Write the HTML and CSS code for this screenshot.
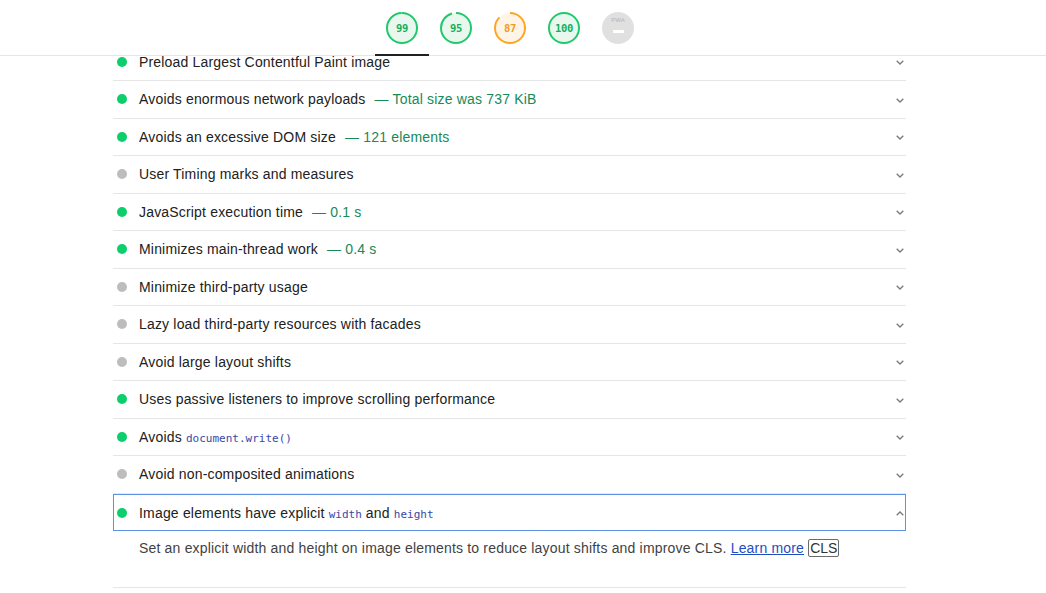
FILE: index.html
```html
<!DOCTYPE html>
<html>
<head>
<meta charset="utf-8">
<link rel="stylesheet" href="styles.css">
</head>
<body>
<header class="topbar">
  <div class="wrap">
    <div class="gauges">
      <div class="gauge active">
        <svg class="ring" viewBox="0 0 32 32"><circle class="bg pass-bg" cx="16" cy="16" r="15"/><circle class="arc pass-arc" cx="16" cy="16" r="15" stroke-dasharray="93.3 94.25"/></svg>
        <span class="num pass-num">99</span>
      </div>
      <div class="gauge">
        <svg class="ring" viewBox="0 0 32 32"><circle class="bg pass-bg" cx="16" cy="16" r="15"/><circle class="arc pass-arc" cx="16" cy="16" r="15" stroke-dasharray="89.5 94.25"/></svg>
        <span class="num pass-num">95</span>
      </div>
      <div class="gauge">
        <svg class="ring" viewBox="0 0 32 32"><circle class="bg avg-bg" cx="16" cy="16" r="15"/><circle class="arc avg-arc" cx="16" cy="16" r="15" stroke-dasharray="82 94.25"/></svg>
        <span class="num avg-num">87</span>
      </div>
      <div class="gauge">
        <svg class="ring" viewBox="0 0 32 32"><circle class="bg pass-bg" cx="16" cy="16" r="15"/><circle class="arc pass-arc" cx="16" cy="16" r="15" stroke-dasharray="94.25 94.25"/></svg>
        <span class="num pass-num">100</span>
      </div>
      <div class="gauge">
        <div class="pwa"><span class="pwa-label">PWA</span><span class="pwa-dash"></span></div>
      </div>
    </div>
  </div>
</header>

<main class="wrap list">
  <div class="audit"><span class="dot pass"></span><span class="title">Preload Largest Contentful Paint image</span><svg class="chev" viewBox="0 0 8 5"><path d="M0.7 0.7 L4 4 L7.3 0.7"/></svg></div>
  <div class="audit"><span class="dot pass"></span><span class="title">Avoids enormous network payloads</span><span class="disp">— Total size was 737 KiB</span><svg class="chev" viewBox="0 0 8 5"><path d="M0.7 0.7 L4 4 L7.3 0.7"/></svg></div>
  <div class="audit"><span class="dot pass"></span><span class="title">Avoids an excessive DOM size</span><span class="disp">— 121 elements</span><svg class="chev" viewBox="0 0 8 5"><path d="M0.7 0.7 L4 4 L7.3 0.7"/></svg></div>
  <div class="audit"><span class="dot na"></span><span class="title">User Timing marks and measures</span><svg class="chev" viewBox="0 0 8 5"><path d="M0.7 0.7 L4 4 L7.3 0.7"/></svg></div>
  <div class="audit"><span class="dot pass"></span><span class="title">JavaScript execution time</span><span class="disp">— 0.1 s</span><svg class="chev" viewBox="0 0 8 5"><path d="M0.7 0.7 L4 4 L7.3 0.7"/></svg></div>
  <div class="audit"><span class="dot pass"></span><span class="title">Minimizes main-thread work</span><span class="disp">— 0.4 s</span><svg class="chev" viewBox="0 0 8 5"><path d="M0.7 0.7 L4 4 L7.3 0.7"/></svg></div>
  <div class="audit"><span class="dot na"></span><span class="title">Minimize third-party usage</span><svg class="chev" viewBox="0 0 8 5"><path d="M0.7 0.7 L4 4 L7.3 0.7"/></svg></div>
  <div class="audit"><span class="dot na"></span><span class="title">Lazy load third-party resources with facades</span><svg class="chev" viewBox="0 0 8 5"><path d="M0.7 0.7 L4 4 L7.3 0.7"/></svg></div>
  <div class="audit"><span class="dot na"></span><span class="title">Avoid large layout shifts</span><svg class="chev" viewBox="0 0 8 5"><path d="M0.7 0.7 L4 4 L7.3 0.7"/></svg></div>
  <div class="audit"><span class="dot pass"></span><span class="title">Uses passive listeners to improve scrolling performance</span><svg class="chev" viewBox="0 0 8 5"><path d="M0.7 0.7 L4 4 L7.3 0.7"/></svg></div>
  <div class="audit"><span class="dot pass"></span><span class="title">Avoids <code>document.write()</code></span><svg class="chev" viewBox="0 0 8 5"><path d="M0.7 0.7 L4 4 L7.3 0.7"/></svg></div>
  <div class="audit"><span class="dot na"></span><span class="title">Avoid non-composited animations</span><svg class="chev" viewBox="0 0 8 5"><path d="M0.7 0.7 L4 4 L7.3 0.7"/></svg></div>
  <div class="expanded">
    <div class="audit open"><span class="dot pass"></span><span class="title">Image elements have explicit <code>width</code> and <code>height</code></span><svg class="chev" viewBox="0 0 8 5"><path d="M0.7 4.3 L4 1 L7.3 4.3"/></svg></div>
    <p class="desc">Set an explicit width and height on image elements to reduce layout shifts and improve CLS. <a href="#" class="learn">Learn more</a> <span class="badge">CLS</span></p>
  </div>
</main>
</body>
</html>
```

FILE: styles.css
```css
html, body {
  margin: 0;
  padding: 0;
  background: #ffffff;
}
body {
  font-family: "Liberation Sans", Arial, sans-serif;
  font-size: 14px;
  letter-spacing: 0.18px;
  color: #212121;
  overflow: hidden;
}
.wrap {
  margin-left: 113px;
  width: 793px;
}
.topbar {
  position: fixed;
  top: 0;
  left: 0;
  right: 0;
  height: 55px;
  background: #ffffff;
  border-bottom: 1px solid #e6e6e6;
  z-index: 10;
}
.topbar .wrap {
  height: 100%;
}
.gauges {
  display: flex;
  justify-content: center;
  height: 100%;
  padding-left: 1px;
}
.gauge {
  position: relative;
  width: 54px;
  height: 100%;
  display: flex;
  justify-content: center;
}
.gauge.active::after {
  content: "";
  position: absolute;
  left: 0;
  right: 0;
  bottom: -1px;
  height: 2px;
  background: #202124;
}
.ring {
  width: 32px;
  height: 32px;
  margin-top: 12px;
  transform: rotate(-90deg);
}
.bg {
  stroke: none;
}
.pass-bg { fill: #e9f8ef; }
.avg-bg { fill: #fff5e6; }
.arc {
  fill: none;
  stroke-width: 2;
}
.pass-arc { stroke: #22c96c; }
.avg-arc { stroke: #ffa526; }
.num {
  position: absolute;
  top: 12px;
  left: 0;
  right: 0;
  height: 32px;
  line-height: 32px;
  text-align: center;
  font-family: "DejaVu Sans Mono", monospace;
  font-weight: bold;
  font-size: 10.5px;
  letter-spacing: -0.3px;
}
.pass-num { color: #13b05b; }
.avg-num { color: #f39a1e; }
.pwa {
  width: 32px;
  height: 32px;
  margin-top: 12px;
  border-radius: 50%;
  background: #e0e0e0;
  display: flex;
  flex-direction: column;
  align-items: center;
}
.pwa-label {
  font-family: "Liberation Sans", Arial, sans-serif;
  font-size: 6px;
  letter-spacing: 0;
  color: #b4b4b4;
  margin-top: 5px;
  line-height: 7px;
}
.pwa-dash {
  width: 11px;
  height: 3px;
  background: #ffffff;
  margin-top: 6px;
}

.list {
  padding-top: 43.5px;
}
.audit {
  height: 37.5px;
  box-sizing: border-box;
  border-bottom: 1px solid #e6e6e6;
  display: flex;
  align-items: center;
  padding-left: 4px;
  padding-right: 2px;
}
.dot {
  width: 10px;
  height: 10px;
  border-radius: 50%;
  margin-right: 12px;
  flex: none;
}
.dot.pass { background: #0cce6b; }
.dot.na { background: #bdbdbd; }
.title {
  white-space: nowrap;
}
code {
  font-family: "DejaVu Sans Mono", monospace;
  font-size: 11px;
  letter-spacing: 0;
  color: #3848a8;
}
.disp {
  margin-left: 9px;
  color: #168a57;
  white-space: nowrap;
}
.chev {
  width: 8px;
  height: 5px;
  margin-left: auto;
  margin-top: 2px;
  fill: none;
  stroke: #7a7a7a;
  stroke-width: 1.3;
}
.expanded {
  border-bottom: 1px solid #e6e6e6;
}
.audit.open {
  border-bottom: none;
  outline: 1px solid #5f93e6;
  outline-offset: -1px;
  padding-top: 1px;
}
.desc {
  margin: 0;
  padding: 7px 0 29px 26px;
  line-height: 20px;
  color: #424242;
}
.learn {
  color: #1f4ec0;
  text-decoration: underline;
}
.badge {
  border: 1px solid #6b6b6b;
  border-radius: 2px;
  padding: 0 1px;
  letter-spacing: 0;
  color: #333333;
}
```
